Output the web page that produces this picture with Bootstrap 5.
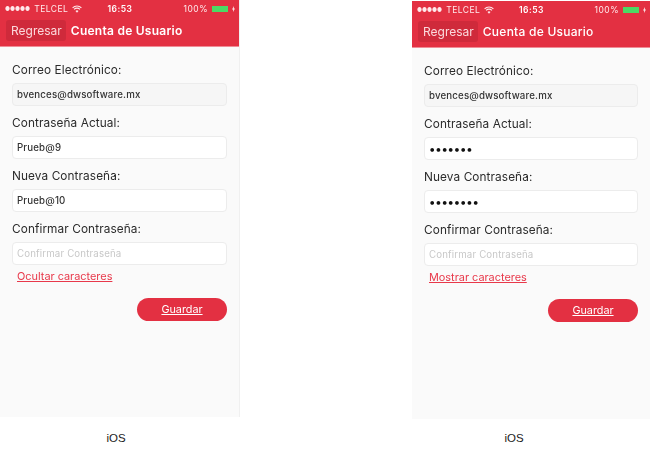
<!DOCTYPE html>
<html lang="es">
<head>
  <meta charset="UTF-8">
  <meta name="viewport" content="width=device-width, initial-scale=1">
  <title>Cuenta de Usuario</title>
  <link href="https://cdn.jsdelivr.net/npm/bootstrap@5.3.0/dist/css/bootstrap.min.css" rel="stylesheet">
  <style>
    html, body { height: 100%; }
    body { background: #fff; overflow: hidden; font-family: Inter, "Liberation Sans", sans-serif; }
    .pantalla-wrap { width: 650px; height: 450px; }
    .columna { width: 240px; }
    .columna-der { width: 238px; padding-top: 1px; }
    .pantalla { height: 417px; background: #fafafa; filter: blur(.45px); }
    .columna-der .pantalla { height: 418px; }
    .linea-der { border-right: 1px solid #f0f0f0; }
    .barra-roja { background: #e33042; color: #fff; height: 47px; border-bottom: 1px solid #ef8c96; }
    .estado { height: 15px; padding: 2px 4px 0 5px; font-size: 8.5px; line-height: 12px; letter-spacing: .5px; color: #ffe9eb; }
    .estado-lado { flex: 1 1 0; }
    .hora { font-weight: 600; font-size: 8.5px; color: #fff; }
    .puntos { letter-spacing: 0; font-size: 5.5px; }
    .pila { width: 16px; height: 6px; background: #4cd964; display: inline-block; }
    .titulo-fila { height: 31px; padding-left: 6px; }
    .btn-regresar { background: #cf2a3b; color: #fbd9dc; font-size: 12px; line-height: 21px; height: 21px; padding: 0 4px 0 5px; border-radius: 3px; border: 0; }
    .titulo { font-size: 12px; font-weight: 600; margin-left: 5px; letter-spacing: .25px; }
    .columna-der .titulo { font-weight: 500; }
    .forma { padding: 15px 12px 0 12px; }
    .etiqueta { font-size: 11.8px; line-height: 16px; color: #2b2b2b; margin: 0 0 5px; letter-spacing: .1px; }
    .campo { height: 23px; border: 1px solid #ececec; border-radius: 4px; background: #fff; font-size: 9.7px; padding: 0 4px; color: #333; margin-bottom: 9px; letter-spacing: .15px; width: 100%; display: block; font-weight: 500; }
    .campo::placeholder { color: #c8c8c8; font-weight: 400; }
    .campo-gris { background: #f6f6f6; }
    .campo-clave { font-size: 12px; letter-spacing: -.2px; color: #111; }
    .enlace-rojo { color: #e8384a; font-size: 10.9px; line-height: 14px; padding-left: 5px; margin-top: -5px; display: block; }
    .btn-guardar { background: #e33042; color: #fff; width: 90px; height: 23px; border-radius: 12px; font-size: 10.8px; line-height: 23px; text-align: center; text-decoration: underline; margin-top: 15px; }
    .pie { font-family: "Liberation Sans", sans-serif; font-size: 11.5px; color: #222; text-align: center; margin-top: 14px; line-height: 14px; padding-right: 8px; }
    .columna-der .pie { margin-top: 12px; padding-right: 34px; }
  </style>
</head>
<body>
  <div class="pantalla-wrap d-flex justify-content-between">

    <div class="columna">
      <div class="pantalla linea-der">
        <div class="barra-roja">
          <div class="estado d-flex align-items-center">
            <span class="estado-lado d-flex align-items-center gap-1"><span class="puntos">●●●●●</span> TELCEL
              <svg width="10" height="8" viewBox="0 0 10 8" fill="none" stroke="#ffe9eb" stroke-width="1.1"><path d="M.6 2.8a6.2 6.2 0 0 1 8.8 0M2.1 4.4a4 4 0 0 1 5.8 0"/><path d="M5 7.8 3.5 6a2 2 0 0 1 3 0Z" fill="#ffe9eb" stroke="none"/></svg></span>
            <span class="hora">16:53</span>
            <span class="estado-lado d-flex align-items-center justify-content-end gap-1">100% <span class="pila"></span>
              <svg width="3" height="6" viewBox="0 0 3 6"><path d="M2 0 0 3.4h1.2L1 6l2-3.4H1.8Z" fill="#ffe9eb"/></svg></span>
          </div>
          <div class="titulo-fila d-flex align-items-center">
            <button class="btn-regresar" type="button">Regresar</button>
            <span class="titulo">Cuenta de Usuario</span>
          </div>
        </div>
        <form class="forma">
          <label class="etiqueta d-block">Correo Electrónico:</label>
          <input class="campo campo-gris" type="text" value="bvences@dwsoftware.mx" readonly>
          <label class="etiqueta d-block">Contraseña Actual:</label>
          <input class="campo" type="text" value="Prueb@9">
          <label class="etiqueta d-block">Nueva Contraseña:</label>
          <input class="campo" type="text" value="Prueb@10">
          <label class="etiqueta d-block">Confirmar Contraseña:</label>
          <input class="campo" type="text" placeholder="Confirmar Contraseña">
          <a class="enlace-rojo" href="#">Ocultar caracteres</a>
          <div class="d-flex justify-content-end"><div class="btn-guardar">Guardar</div></div>
        </form>
      </div>
      <div class="pie">iOS</div>
    </div>

    <div class="columna-der">
      <div class="pantalla">
        <div class="barra-roja">
          <div class="estado d-flex align-items-center">
            <span class="estado-lado d-flex align-items-center gap-1"><span class="puntos">●●●●●</span> TELCEL
              <svg width="10" height="8" viewBox="0 0 10 8" fill="none" stroke="#ffe9eb" stroke-width="1.1"><path d="M.6 2.8a6.2 6.2 0 0 1 8.8 0M2.1 4.4a4 4 0 0 1 5.8 0"/><path d="M5 7.8 3.5 6a2 2 0 0 1 3 0Z" fill="#ffe9eb" stroke="none"/></svg></span>
            <span class="hora">16:53</span>
            <span class="estado-lado d-flex align-items-center justify-content-end gap-1">100% <span class="pila"></span>
              <svg width="3" height="6" viewBox="0 0 3 6"><path d="M2 0 0 3.4h1.2L1 6l2-3.4H1.8Z" fill="#ffe9eb"/></svg></span>
          </div>
          <div class="titulo-fila d-flex align-items-center">
            <button class="btn-regresar" type="button">Regresar</button>
            <span class="titulo">Cuenta de Usuario</span>
          </div>
        </div>
        <form class="forma">
          <label class="etiqueta d-block">Correo Electrónico:</label>
          <input class="campo campo-gris" type="text" value="bvences@dwsoftware.mx" readonly>
          <label class="etiqueta d-block">Contraseña Actual:</label>
          <input class="campo campo-clave" type="password" value="Prueb@9">
          <label class="etiqueta d-block">Nueva Contraseña:</label>
          <input class="campo campo-clave" type="password" value="Prueb@10">
          <label class="etiqueta d-block">Confirmar Contraseña:</label>
          <input class="campo" type="text" placeholder="Confirmar Contraseña">
          <a class="enlace-rojo" href="#">Mostrar caracteres</a>
          <div class="d-flex justify-content-end"><div class="btn-guardar">Guardar</div></div>
        </form>
      </div>
      <div class="pie">iOS</div>
    </div>

  </div>
  <script src="https://cdn.jsdelivr.net/npm/bootstrap@5.3.0/dist/js/bootstrap.bundle.min.js"></script>
</body>
</html>
